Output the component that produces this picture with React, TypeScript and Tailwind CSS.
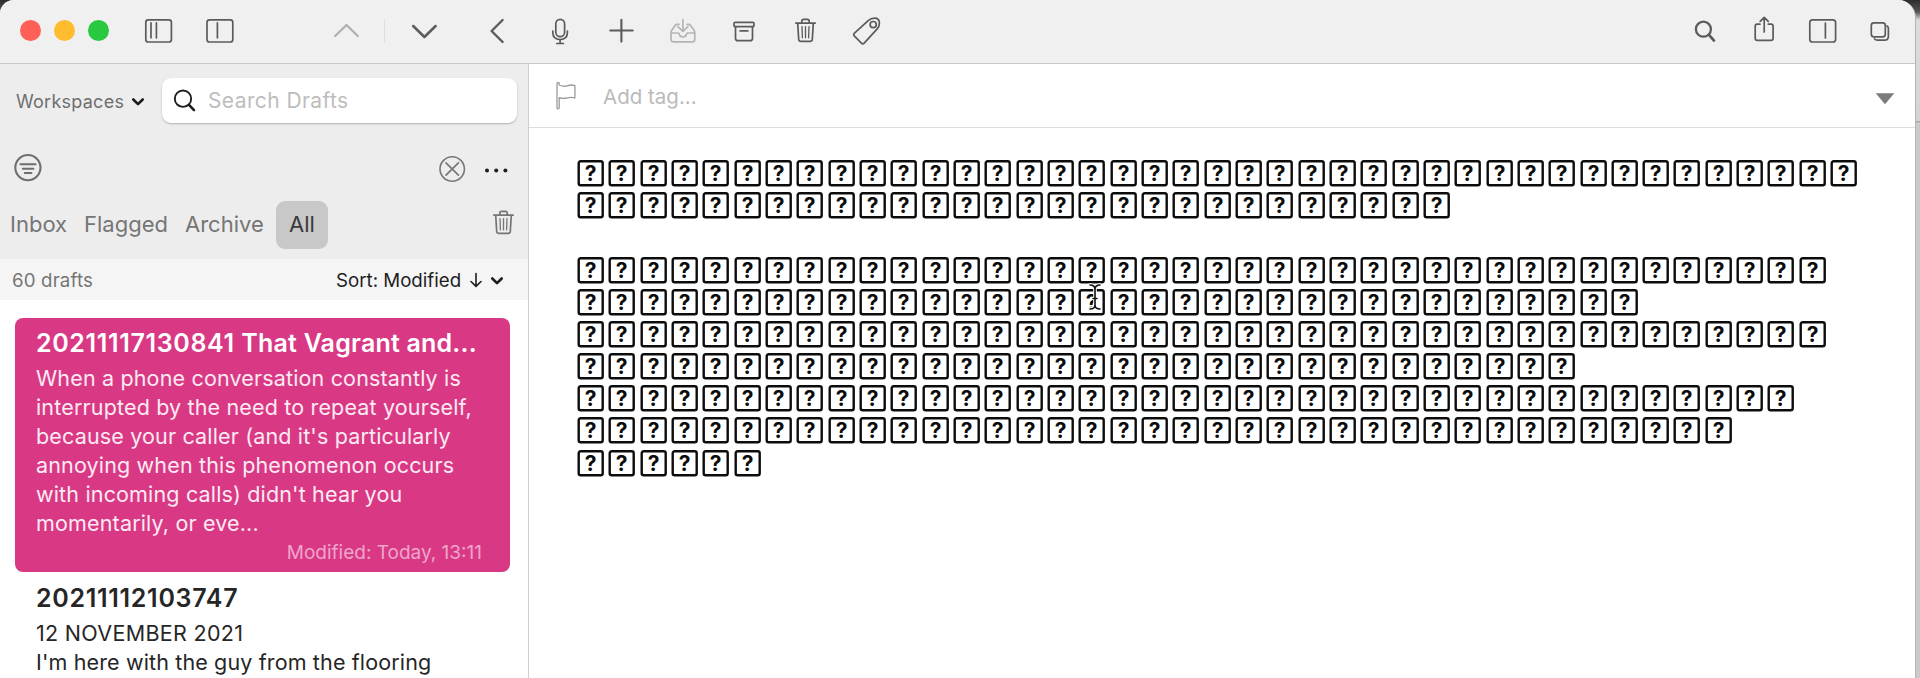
import React from "react";

type GlyphProps = {
  box: string;
  className: string;
  children: React.ReactNode;
};

function Glyph({ box, className, children }: GlyphProps) {
  return (
    <svg
      viewBox={box}
      className={`block shrink-0 ${className}`}
      fill="none"
      stroke="currentColor"
      strokeWidth={1.7}
      strokeLinecap="round"
      strokeLinejoin="round"
    >
      {children}
    </svg>
  );
}

function Trash() {
  return (
    <>
      <path d="M0.8 5.1H20.2M6.8 4.8V3.2Q6.8 1.3 8.7 1.3H12.3Q14.2 1.3 14.2 3.2V4.8M2.7 5.3L3.7 21.4Q3.9 23.4 6 23.4H15Q17.1 23.4 17.3 21.4L18.3 5.3" />
      <path d="M7 8.6L7.4 19.8M10.5 8.6V19.8M14 8.6L13.6 19.8" strokeWidth={1.3} />
    </>
  );
}

function Toolbar() {
  return (
    <header className="flex h-16 shrink-0 border-b border-[#c9c9c9] bg-[#f1f0f1] pt-[15px] pl-5 pr-[23px] text-[#5b5b5b]">
      <div className="flex gap-[13px] pt-[5px]">
        <span className="size-[21px] rounded-full bg-[#fe5f57]" />
        <span className="size-[21px] rounded-full bg-[#febc2e]" />
        <span className="size-[21px] rounded-full bg-[#28c840]" />
      </div>
      <Glyph box="144 15 30 32" className="ml-[35px] h-8 w-[30px]">
        <rect x="145.8" y="19.8" width="25.6" height="22.2" rx="2.5" />
        <path d="M151 22.8V37.8M156.4 22.8V37.8" />
      </Glyph>
      <Glyph box="205 15 30 32" className="ml-[31px] h-8 w-[30px]">
        <rect x="207" y="19.8" width="25.8" height="22.2" rx="2.5" />
        <path d="M217.4 22.8V37.8" />
      </Glyph>
      <Glyph box="332 16 29 32" className="ml-[97px] h-8 w-[29px] text-[#b0b0b0]">
        <path d="M335.2 37L346.5 26L357.8 37" strokeWidth={2.3} />
      </Glyph>
      <span className="mt-1 ml-[23px] h-6 w-px bg-[#dedede]" />
      <Glyph box="410 16 29 32" className="ml-[25px] h-8 w-[29px]">
        <path d="M413.2 27L424.4 38L435.6 27" strokeWidth={2.5} />
      </Glyph>
      <Glyph box="488 16 18 32" className="ml-[49px] h-8 w-[18px]">
        <path d="M502.6 21L491.6 32L502.6 43" strokeWidth={2.4} />
      </Glyph>
      <Glyph box="550 16 20 32" className="ml-11 h-8 w-5">
        <rect x="555.8" y="20.4" width="8.8" height="17.2" rx="4.4" />
        <path d="M552.8 32V33.6Q552.8 40.6 560.1 40.6Q567.4 40.6 567.4 33.6V32M560.1 40.6V44.4M556.8 44.5H563.4" />
      </Glyph>
      <Glyph box="608 16 27 32" className="ml-[38px] h-8 w-[27px]">
        <path d="M610.3 31.5H632.7M621.4 20.8V42.6" strokeWidth={2.1} />
      </Glyph>
      <Glyph box="668 16 30 32" className="ml-[33px] h-8 w-[30px] text-[#b4b4b4]">
        <path d="M679 25.3H677Q676 25.3 675.3 26.2L671.6 31.5Q671 32.4 671 33.5V40.2Q671 42.9 673.8 42.9H692Q694.8 42.9 694.8 40.2V33.5Q694.8 32.4 694.2 31.5L690.4 26.2Q689.8 25.3 688.8 25.3H687" />
        <path d="M671.5 34H678Q679.3 34 679.3 35.2Q679.8 38 682.9 38Q686 38 686.5 35.2Q686.5 34 687.8 34H694.4M682.9 20.6V32.2M677.9 27.6L682.9 32.4L687.9 27.6" />
      </Glyph>
      <Glyph box="731 16 26 32" className="ml-[33px] h-8 w-[26px]">
        <rect x="734" y="23.4" width="20" height="4.2" rx="1" />
        <path d="M735.5 27.6V39.2Q735.5 41.7 738 41.7H750Q752.5 41.7 752.5 39.2V27.6M740.2 31.9H747.8" />
      </Glyph>
      <Glyph box="-2 -3 25 32" className="ml-9 h-8 w-[25px]">
        <Trash />
      </Glyph>
      <Glyph box="851 16 32 32" className="ml-[33px] size-8">
        <path d="M854.5 34.2L868.2 21.7Q871 19.2 874.5 19.2Q879.4 19.2 879.4 24Q879.4 27.5 877.2 29.9L864.2 44.1Q862.8 45.6 861.4 44.2L854.5 37.2Q853 35.7 854.5 34.2Z" />
        <circle cx="873.2" cy="25.6" r="3.1" />
      </Glyph>
      <Glyph box="1693 15 25 32" className="ml-auto h-8 w-[25px]">
        <circle cx="1703.4" cy="29.2" r="7.5" strokeWidth={2.3} />
        <path d="M1709 34.8L1714 40.6" strokeWidth={2.7} />
      </Glyph>
      <Glyph box="1752 15 24 32" className="ml-[34px] h-8 w-6">
        <path d="M1760 24.2H1757.3Q1755.2 24.2 1755.2 26.3V38.3Q1755.2 40.4 1757.3 40.4H1771Q1773.1 40.4 1773.1 38.3V26.3Q1773.1 24.2 1771 24.2H1768.3M1764.2 32V17.8M1760.2 21.3L1764.2 17.4L1768.2 21.3" />
      </Glyph>
      <Glyph box="1807 15 32 32" className="ml-[31px] size-8">
        <rect x="1809.8" y="19.8" width="25.8" height="22.2" rx="2.8" />
        <path d="M1825.4 23V38" />
      </Glyph>
      <Glyph box="1868 15 24 32" className="ml-[29px] h-8 w-6">
        <rect x="1871.3" y="22.9" width="14" height="14" rx="2.6" />
        <path d="M1887 26Q1888.4 26.8 1888.4 28.6V36.2Q1888.4 40.2 1884.4 40.2H1877.4Q1875.4 40.2 1874.6 38.8" />
      </Glyph>
    </header>
  );
}

function Chevron() {
  return (
    <Glyph box="0 0 14 10" className="h-[10px] w-[14px] text-[#1c1c1c]">
      <path d="M2.3 2.5L7 7.2L11.7 2.5" strokeWidth={2.6} />
    </Glyph>
  );
}

function Sidebar() {
  return (
    <aside className="flex w-[529px] shrink-0 flex-col border-r border-[#cfcfcf] bg-[#ededed]">
      <div className="flex h-[60px] items-end">
        <button className="mb-[9px] ml-4 flex h-7 w-[115px] items-center text-[18px] tracking-[0.25px] whitespace-nowrap text-[#6f6f6f]">
          Workspaces
        </button>
        <div className="mb-[17px]">
          <Chevron />
        </div>
        <div className="mb-px ml-[17px] flex h-[45px] w-[355px] items-center rounded-[9px] bg-white pl-[11px] shadow-[0_1px_2px_rgba(0,0,0,0.25)]">
          <Glyph box="173 91.5 24 25" className="h-[25px] w-6 text-[#1e1e1e]">
            <circle cx="183" cy="102.2" r="8.2" strokeWidth={1.9} />
            <path d="M189 108.4L194 113.6" strokeWidth={2.6} />
          </Glyph>
          <span className="ml-[11px] pt-px text-[21px] tracking-[0.4px] text-[#bdbdbd]">Search Drafts</span>
        </div>
      </div>

      <div className="flex h-[76px] pt-[27px] pl-[13px]">
        <Glyph box="13 151 30 32" className="h-8 w-[30px] text-[#6e6e6e]">
          <circle cx="27.9" cy="167.6" r="12.6" strokeWidth={2.1} />
          <path d="M20.4 164.3H35.6M22.8 168.7H33.4M24.8 173H31.4" strokeWidth={2} />
        </Glyph>
        <Glyph box="437 151 30 32" className="ml-[394px] h-8 w-[30px] text-[#777]">
          <circle cx="452.2" cy="169" r="12.2" strokeWidth={1.6} />
          <path d="M446 162.8L458.4 175.2M458.4 162.8L446 175.2" strokeWidth={1.7} />
        </Glyph>
        <Glyph box="483 151 26 32" className="ml-4 h-8 w-[26px] text-[#1e1e1e]">
          <g fill="currentColor" stroke="none">
            <circle cx="487" cy="170.5" r="2" />
            <circle cx="496.2" cy="170.5" r="2" />
            <circle cx="505.4" cy="170.5" r="2" />
          </g>
        </Glyph>
      </div>

      <nav className="flex h-[59px] items-start text-[22px] text-[#757575]">
        <span className="mt-px ml-[10px] w-[74px] leading-[47px]">Inbox</span>
        <span className="mt-px w-[101px] leading-[47px]">Flagged</span>
        <span className="mt-px w-[91px] leading-[47px]">Archive</span>
        <span className="mt-px h-[48px] w-[52px] rounded-[9px] bg-[#c8c8c8] text-center leading-[47px] text-[#3a3a3a]">
          All
        </span>
        <Glyph box="-2 -2 25 29" className="mt-2 ml-[163px] h-[29px] w-[25px]">
          <Trash />
        </Glyph>
      </nav>

      <div className="flex h-[41px] shrink-0 items-center bg-[#f5f5f5] pt-[3px] pl-3 text-[18.7px] text-[#757575]">
        <span className="w-[324px] tracking-[0.15px]">60 drafts</span>
        <span className="w-[132px] whitespace-nowrap text-[#1e1e1e]">Sort: Modified</span>
        <Glyph box="0 1 16 18" className="mr-[6px] h-[18px] w-4 text-[#1e1e1e]">
          <path d="M8 2.5V15M3 10.5L8 15.4L13 10.5" strokeWidth={1.6} />
        </Glyph>
        <Chevron />
      </div>

      <div className="min-h-0 flex-1 overflow-hidden bg-white pt-[18px] pr-[18px] pl-[15px]">
        <article className="h-[254px] rounded-lg bg-[#d93984] pt-[7px] pl-[21px] text-white">
          <h2 className="text-[25px] leading-9 font-semibold tracking-[0.2px] whitespace-nowrap">
            <span className="tracking-[0.65px]">20211117130841</span> That Vagrant and...
          </h2>
          <p className="mt-[3px] text-[21.5px] leading-[29.1px] tracking-[0.16px] whitespace-nowrap text-[#fdeaf3]">
            When a phone conversation constantly is
            <br />
            interrupted by the need to repeat yourself,
            <br />
            because your caller (and it's particularly
            <br />
            annoying when this phenomenon occurs
            <br />
            with incoming calls) didn't hear you
            <br />
            momentarily, or eve...
          </p>
          <p className="pt-px pr-7 text-right text-[19px] leading-[26px] text-[#f0a5cb]">Modified: Today, 13:11</p>
        </article>
        <article className="pt-2 pl-[21px] text-[#262626]">
          <h2 className="text-[25px] leading-9 font-semibold tracking-[0.7px] whitespace-nowrap">20211112103747</h2>
          <p className="pt-[3px] text-[21.5px] leading-[29.1px] tracking-[0.14px] whitespace-nowrap">
            <span className="tracking-[0.3px]">12 NOVEMBER 2021</span>
            <br />
            I'm here with the guy from the flooring
          </p>
        </article>
      </div>
    </aside>
  );
}

const rows = [41, 28, 0, 40, 34, 40, 32, 39, 37, 6];

function MissingGlyph() {
  return (
    <svg viewBox="0 0 31.33 32.15" className="block h-[32.15px] w-[31.33px] shrink-0">
      <rect x="1.7" y="4.2" width="24" height="24" rx="2" fill="none" stroke="#0c0c0c" strokeWidth="2.4" />
      <text x="13.7" y="24" textAnchor="middle" fontSize="21" fontWeight="700" fill="#0c0c0c">
        ?
      </text>
    </svg>
  );
}

function Editor() {
  return (
    <main className="relative flex min-w-0 flex-1 flex-col bg-white">
      <div className="flex h-16 shrink-0 items-start border-b border-[#dedede] pl-[25px]">
        <Glyph box="554 83 24 32" className="mt-4 h-8 w-6 text-[#9a9a9a]">
          <path
            d="M557 86.5Q557 85.5 558.1 85.5Q559.2 85.5 559.2 86.5V88Q564 90.2 568 88.6Q571.5 87.4 574.9 88.6V101Q571 99.8 567 101Q563 102 559.2 100.6V110.7Q559.2 111.8 558.1 111.8Q557 111.8 557 110.7Z"
            strokeWidth={1.3}
          />
        </Glyph>
        <span className="mt-[17px] ml-[25px] text-[20.5px] leading-8 text-[#bababa]">Add tag...</span>
        <Glyph box="1875 92 20 13" className="mt-7 mr-5 ml-auto h-[13px] w-5 text-[#7b7b7b]">
          <path d="M1875.7 93.2H1894.3L1885 104.2Z" fill="currentColor" stroke="none" />
        </Glyph>
      </div>
      <div className="pt-[29.3px] pl-[48px]">
        {rows.map((count, row) => (
          <div key={row} className="flex h-[32.15px]">
            {Array.from({ length: count }, (_, i) => (
              <MissingGlyph key={i} />
            ))}
          </div>
        ))}
      </div>
      <svg viewBox="0 0 14 28" className="absolute top-[219px] left-[559px] h-7 w-[14px]" fill="none" strokeLinecap="round">
        <path d="M2 2Q7 2 7 6.5V22Q7 26 2 26M12 2Q7 2 7 6.5M7 22Q7 26 12 26M5 15.5H9" stroke="#fff" strokeWidth="3.6" />
        <path d="M2 2Q7 2 7 6.5V22Q7 26 2 26M12 2Q7 2 7 6.5M7 22Q7 26 12 26M5 15.5H9" stroke="#111" strokeWidth="1.6" />
      </svg>
    </main>
  );
}

export default function App() {
  return (
    <div className="flex h-[678px] w-[1920px] overflow-hidden bg-[linear-gradient(#2c2c2c_0,#555_12px,#dcdcdc_20px,#d4d4d4_121px,#a8a8a8_121px,#a8a8a8_122px,#cacaca_123px,#cacaca_100%)] font-['Inter',sans-serif]">
      <div className="flex w-[1916px] flex-col overflow-hidden rounded-tl-[14px] rounded-tr-[18px] border-r border-[#b4b4b4] bg-[#f1f0f1]">
        <Toolbar />
        <div className="flex min-h-0 flex-1">
          <Sidebar />
          <Editor />
        </div>
      </div>
    </div>
  );
}
